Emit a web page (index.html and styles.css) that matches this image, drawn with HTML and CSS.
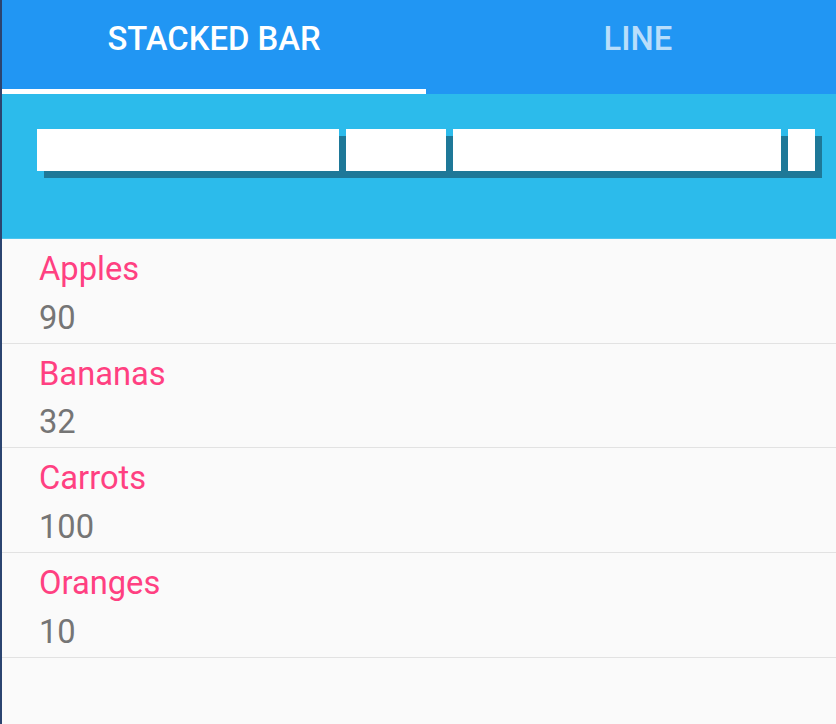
FILE: index.html
```html
<!DOCTYPE html>
<html lang="en">
<head>
<meta charset="utf-8">
<title>Stacked Bar</title>
<link rel="stylesheet" href="styles.css">
</head>
<body>
<div class="frame">
  <div class="edge"></div>
  <div class="app">
    <nav class="tabs">
      <div class="tab tab-active">STACKED BAR</div>
      <div class="tab">LINE</div>
    </nav>
    <section class="chart">
      <div class="bar">
        <div class="seg" style="width:302px"></div>
        <div class="seg" style="width:100px"></div>
        <div class="seg" style="width:328px"></div>
        <div class="seg" style="width:27px"></div>
      </div>
    </section>
    <ul class="list">
      <li class="item"><div class="name">Apples</div><div class="value">90</div></li>
      <li class="item"><div class="name">Bananas</div><div class="value">32</div></li>
      <li class="item"><div class="name">Carrots</div><div class="value">100</div></li>
      <li class="item"><div class="name">Oranges</div><div class="value">10</div></li>
    </ul>
  </div>
</div>
</body>
</html>
```
FILE: styles.css
```css
html, body {
  margin: 0;
  padding: 0;
  height: 100%;
  overflow: hidden;
  background: #fafafa;
  font-family: Roboto, "Noto Sans", sans-serif;
}

.frame {
  display: flex;
  height: 100%;
}

.edge {
  width: 2px;
  flex-shrink: 0;
  background: #2b4470;
}

.app {
  width: 848px;
  flex-shrink: 0;
  display: flex;
  flex-direction: column;
}

.tabs {
  display: grid;
  grid-template-columns: 1fr 1fr;
  background: #2196f3;
  height: 94px;
}

.tab {
  box-sizing: border-box;
  height: 94px;
  padding-top: 20px;
  text-align: center;
  font-size: 32.8px;
  line-height: 38px;
  font-weight: 500;
  color: rgba(255, 255, 255, 0.7);
  border-bottom: 5px solid transparent;
}

.tab-active {
  color: #ffffff;
  border-bottom-color: #ffffff;
}

.chart {
  background: #2cbbeb;
  height: 145px;
  box-sizing: border-box;
  padding: 35px 0 0 35px;
  border-bottom: 1px solid #4cc6ef;
}

.bar {
  position: relative;
  display: flex;
  gap: 7px;
  height: 42px;
  width: max-content;
}

.bar::before {
  content: "";
  position: absolute;
  left: 7px;
  top: 7px;
  right: -7px;
  bottom: -7px;
  background: #1e7898;
}

.seg {
  position: relative;
  height: 42px;
  background: #ffffff;
}

.list {
  list-style: none;
  margin: 0;
  padding: 0;
}

.item {
  padding: 6px 0 0 37px;
  height: 97.67px;
  border-bottom: 1px solid #e2e2e2;
}

.name,
.value {
  font-size: 32.7px;
}

.name {
  color: #ff4081;
  line-height: 48.67px;
}

.value {
  color: #757575;
  line-height: 49px;
}
```
